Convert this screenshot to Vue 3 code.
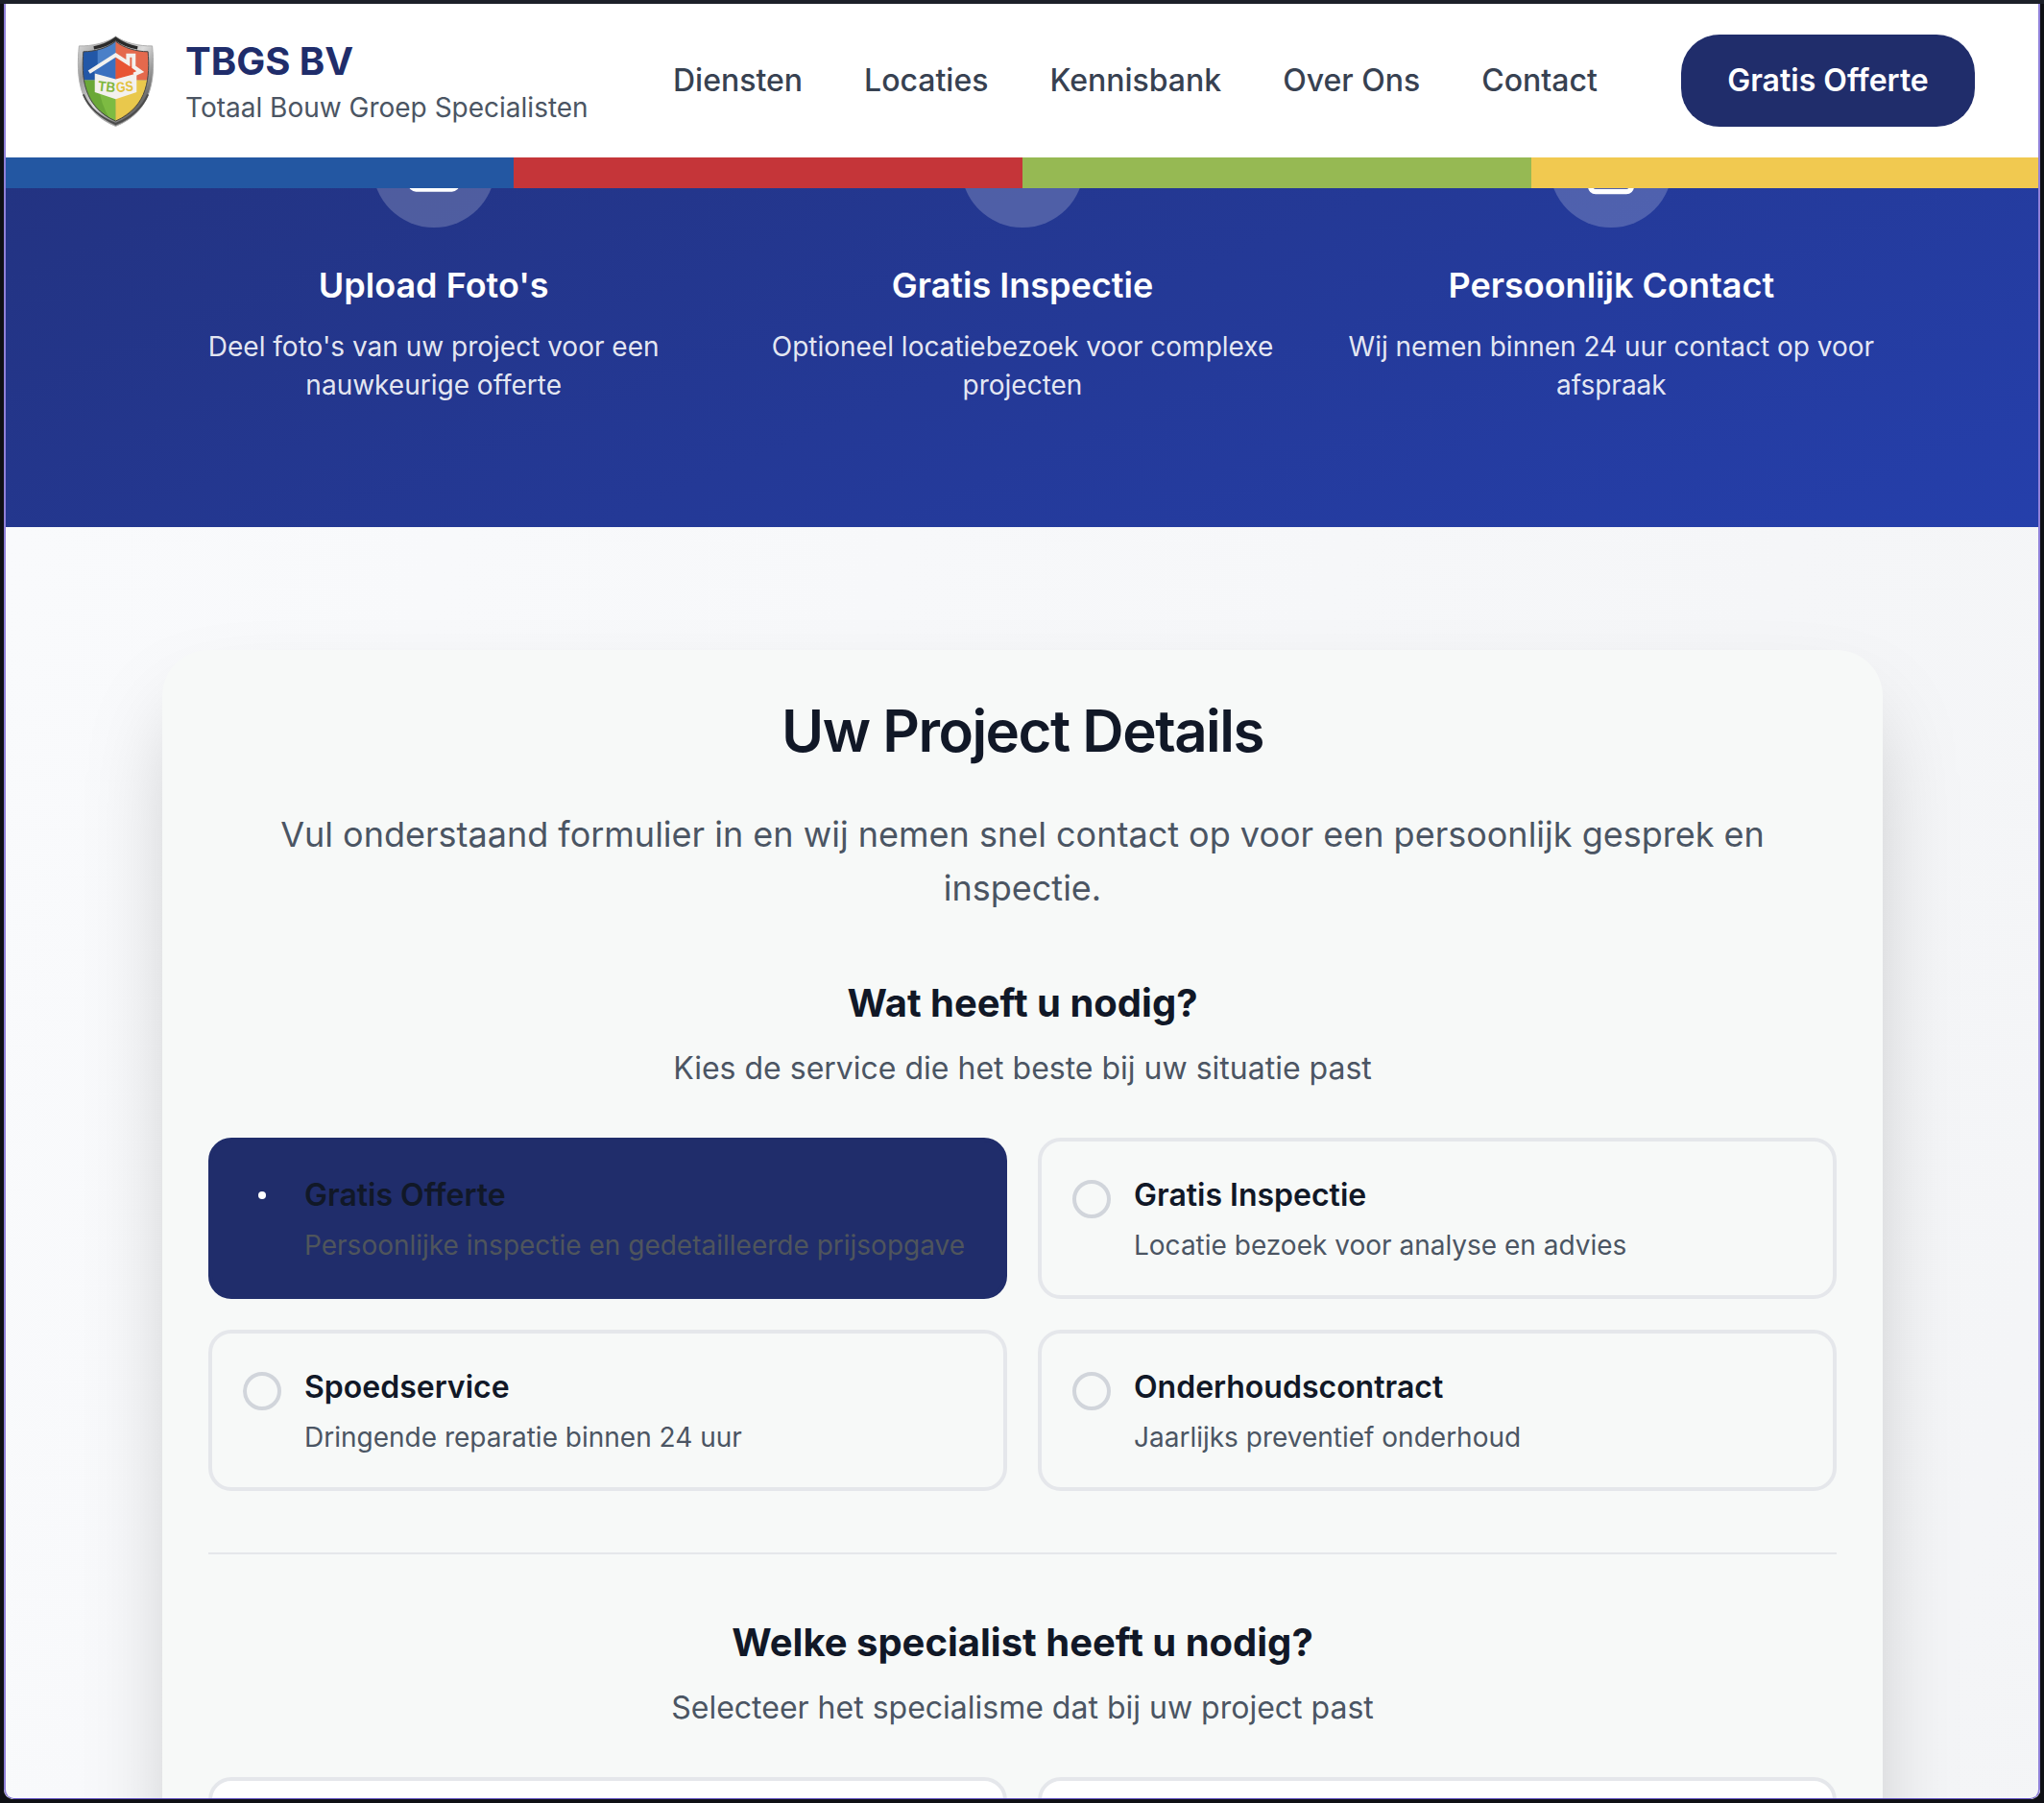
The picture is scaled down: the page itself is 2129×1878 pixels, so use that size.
<script setup>
const nav = ['Diensten', 'Locaties', 'Kennisbank', 'Over Ons', 'Contact']
const features = [
  { icon: 'upload', title: "Upload Foto's", lines: ["Deel foto's van uw project voor een", 'nauwkeurige offerte'] },
  { icon: 'pin', title: 'Gratis Inspectie', lines: ['Optioneel locatiebezoek voor complexe', 'projecten'] },
  { icon: 'file', title: 'Persoonlijk Contact', lines: ['Wij nemen binnen 24 uur contact op voor', 'afspraak'] },
]
const services = [
  { title: 'Gratis Offerte', text: 'Persoonlijke inspectie en gedetailleerde prijsopgave', active: true },
  { title: 'Gratis Inspectie', text: 'Locatie bezoek voor analyse en advies' },
  { title: 'Spoedservice', text: 'Dringende reparatie binnen 24 uur' },
  { title: 'Onderhoudscontract', text: 'Jaarlijks preventief onderhoud' },
]
</script>

<template>
  <div class="screen">
    <div class="window">
      <header class="header">
        <div class="brand">
          <svg class="logo" width="82" height="96" viewBox="-0.5 -1 82 97">
            <defs>
              <linearGradient id="rim" x1="0" y1="0" x2="1" y2="1">
                <stop offset="0" stop-color="#e4e4e4" />
                <stop offset=".25" stop-color="#9a9a9a" />
                <stop offset=".5" stop-color="#dcdcdc" />
                <stop offset=".8" stop-color="#666" />
                <stop offset="1" stop-color="#bbb" />
              </linearGradient>
              <clipPath id="shield">
                <path d="M41 6C33 13 19 17 7 17C5 42 6 75 41 90C76 75 77 42 75 17C63 17 49 13 41 6Z" />
              </clipPath>
            </defs>
            <path d="M41 1C32 7.500 16 11.500 2.500 11C-.5 42 .5 79 41 95.500C81.500 79 82.500 42 79.500 11C66 11.500 50 7.500 41 1Z" fill="url(#rim)" stroke="#adadad" stroke-width="1" />
            <path d="M18 13C27 11.500 35 8 41 3.500C47 8 55 11.500 64 13" fill="none" stroke="#2a2a2a" stroke-width="3.500" />
            <path d="M7 62C13 76 24 86 41 93C58 86 69 76 75 62" fill="none" stroke="#4c4c4c" stroke-width="2" />
            <g clip-path="url(#shield)">
              <rect width="41" height="47" fill="#2257a7" />
              <rect x="22" width="19" height="47" fill="#4a80c8" />
              <rect x="41" width="41" height="47" fill="#e4694d" />
              <rect y="47" width="41" height="49" fill="#6aa838" />
              <path d="M22 47H41V96Q25 78 22 47Z" fill="#7dbb42" />
              <rect x="41" y="47" width="41" height="49" fill="#e9c84c" />
              <path d="M76 47Q70 74 41 90V96H82V47Z" fill="#c6a13a" />
            </g>
            <path d="M41 6C33 13 19 17 7 17C5 42 6 75 41 90C76 75 77 42 75 17C63 17 49 13 41 6Z" fill="none" stroke="#444" stroke-width="1" />
            <path d="M41 22L18 38L20 41L41 46Z" fill="#3b70bf" />
            <path d="M41 22L66 38L62 41L41 46Z" fill="#e85534" />
            <path d="M13 38.500L41 20.500L54 29V21H60V33L67 38L60 41" fill="none" stroke="#f3f1ee" stroke-width="4" />
            <path d="M19 40L41 46L63 40V59.500L41 67L19 59.500Z" fill="#f3f1ee" />
            <text class="mark" x="22.500" y="59" fill="#7fb63c" transform="rotate(6 32 55)" textLength="18" lengthAdjust="spacingAndGlyphs">TB</text>
            <text class="mark" x="41.500" y="59" fill="#e3c23c" transform="rotate(-6 50 55)" textLength="18" lengthAdjust="spacingAndGlyphs">GS</text>
          </svg>
          <div class="names">
            <div class="name">TBGS BV</div>
            <div class="tagline">Totaal Bouw Groep Specialisten</div>
          </div>
        </div>
        <nav class="nav">
          <a v-for="n in nav" :key="n">{{ n }}</a>
        </nav>
        <a class="cta">Gratis Offerte</a>
      </header>
      <div class="stripes"><i class="blue" /><i class="red" /><i class="green" /><i class="yellow" /></div>

      <section class="hero">
        <div class="features">
          <div v-for="f in features" :key="f.title" class="feature">
            <div class="bubble">
              <svg v-if="f.icon === 'upload'" width="64" height="64" viewBox="0 0 24 24">
                <path d="M21 15v4a2 2 0 0 1-2 2H5a2 2 0 0 1-2-2v-4M17 8l-5-5-5 5M12 3v12" />
              </svg>
              <svg v-else-if="f.icon === 'file'" width="64" height="64" viewBox="0 0 24 24">
                <path d="M15 2H6a2 2 0 0 0-2 2v16a2 2 0 0 0 2 2h12a2 2 0 0 0 2-2V7Z" />
              </svg>
            </div>
            <h3>{{ f.title }}</h3>
            <p><span v-for="l in f.lines" :key="l">{{ l }}</span></p>
          </div>
        </div>
      </section>

      <main class="main">
        <div class="card">
          <h1>Uw Project Details</h1>
          <p class="lead">
            <span>Vul onderstaand formulier in en wij nemen snel contact op voor een persoonlijk gesprek en</span>
            <span>inspectie.</span>
          </p>
          <h2>Wat heeft u nodig?</h2>
          <p class="sub">Kies de service die het beste bij uw situatie past</p>
          <div class="options">
            <div v-for="s in services" :key="s.title" class="option" :class="{ active: s.active }">
              <span class="radio" />
              <div>
                <div class="o-title">{{ s.title }}</div>
                <div class="o-text">{{ s.text }}</div>
              </div>
            </div>
          </div>
          <hr />
          <h2>Welke specialist heeft u nodig?</h2>
          <p class="sub">Selecteer het specialisme dat bij uw project past</p>
          <div class="options">
            <div class="option blank" />
            <div class="option blank" />
          </div>
        </div>
      </main>
    </div>
  </div>
</template>

<style>
body { margin: 0; background: #0f1015; }
</style>

<style scoped>
.screen { box-sizing: border-box; width: 2129px; height: 1878px; padding: 4px; overflow: hidden; background: linear-gradient(#1c2029 4px, #0f1015 4px); font-family: Inter, "Liberation Sans", sans-serif; }
.window { position: relative; display: flex; flex-direction: column; box-sizing: border-box; height: 1870px; padding-left: 1px; overflow: hidden; border-radius: 0 0 10px 10px; background: #fff; }
.window::after { content: ""; position: absolute; inset: 0; border: solid #8f80d8; border-width: 0 2px 1px; border-bottom-color: #5f4fc0; border-radius: 0 0 10px 10px; }
.header { display: flex; align-items: center; box-sizing: border-box; height: 160px; flex: none; padding: 0 68px 0 74px; background: #fff; white-space: nowrap; }
.brand { display: flex; align-items: center; width: 622px; }
.logo { flex: none; margin-right: 32px; }
.mark { font: 700 15px "Liberation Sans", sans-serif; }
.name { font-size: 40px; line-height: 56px; font-weight: 700; color: #202d6b; }
.tagline { font-size: 28px; line-height: 40px; color: #4b5563; }
.nav { display: flex; gap: 64px; font-size: 32px; line-height: 48px; font-weight: 500; color: #374151; }
.cta { box-sizing: border-box; width: 306px; height: 96px; margin-left: auto; padding: 24px 0; border-radius: 40px; background: #202d6b; color: #fff; font-size: 32px; line-height: 48px; font-weight: 600; text-align: center; }
.stripes { display: flex; height: 32px; flex: none; }
.stripes i { flex: 1; }
.blue { background: #2357a2; }
.red { background: #c53539; }
.green { background: #96b953; }
.yellow { background: #f1c950; }
.hero { height: 353px; flex: none; overflow: hidden; background: linear-gradient(to bottom right, #222e70, #253fab) bottom / 100% 900px no-repeat; color: #fff; }
.features { display: grid; grid-template-columns: repeat(3, 1fr); gap: 48px; width: 1792px; margin: -87px auto 0; }
.feature { display: flex; flex-direction: column; align-items: center; text-align: center; }
.bubble { display: flex; align-items: center; justify-content: center; width: 128px; height: 128px; border-radius: 50%; background: rgba(255, 255, 255, .2); }
.bubble svg { fill: none; stroke: #fff; stroke-width: 2; stroke-linecap: round; stroke-linejoin: round; }
h3 { margin: 32px 0 0; font-size: 36px; line-height: 56px; font-weight: 600; }
.feature p { margin: 16px 0 0; font-size: 28px; line-height: 40px; color: rgba(255, 255, 255, .9); }
.feature p span, .lead span { display: block; white-space: nowrap; }
.main { flex: 1; padding-top: 128px; background: linear-gradient(105deg, #f9fafc, #f3f4f6); }
.card { box-sizing: border-box; width: 1792px; height: 2400px; margin: 0 auto; padding: 48px; border-radius: 48px; background: #f7f9f8; box-shadow: 0 50px 100px -24px rgba(0, 0, 0, .25); text-align: center; }
h1 { margin: 0; font-size: 60px; line-height: 72px; font-weight: 600; letter-spacing: -.025em; color: #111827; }
.lead { margin: 44px 0 0; font-size: 36px; line-height: 56px; color: #4b5563; }
h2 { margin: 64px 0 0; font-size: 40px; line-height: 56px; font-weight: 700; color: #111827; }
.sub { margin: 16px 0 0; font-size: 32px; line-height: 48px; color: #4b5563; }
.options { display: grid; grid-template-columns: 1fr 1fr; gap: 32px; margin-top: 48px; text-align: left; }
.option { display: flex; box-sizing: border-box; height: 168px; gap: 24px; padding: 32px; border: 4px solid #e5e7eb; border-radius: 24px; }
.radio { position: relative; box-sizing: border-box; flex: none; width: 40px; height: 40px; margin-top: 8px; border: 4px solid #d1d5db; border-radius: 50%; }
.o-title { font-size: 32px; line-height: 48px; font-weight: 600; color: #111827; }
.o-text { margin-top: 8px; font-size: 28px; line-height: 40px; color: #4b5563; white-space: nowrap; }
.active { background: #202d6b; border-color: #202d6b; }
.active .radio { border-color: transparent; }
.active .radio::after { content: ""; position: absolute; left: 12px; top: 8px; width: 8px; height: 8px; border-radius: 50%; background: #fff; }
.active .o-text { color: #4f555c; }
.blank { background: #fff; }
hr { height: 2px; margin: 64px 0 0; border: 0; background: #e5e7eb; }
</style>
